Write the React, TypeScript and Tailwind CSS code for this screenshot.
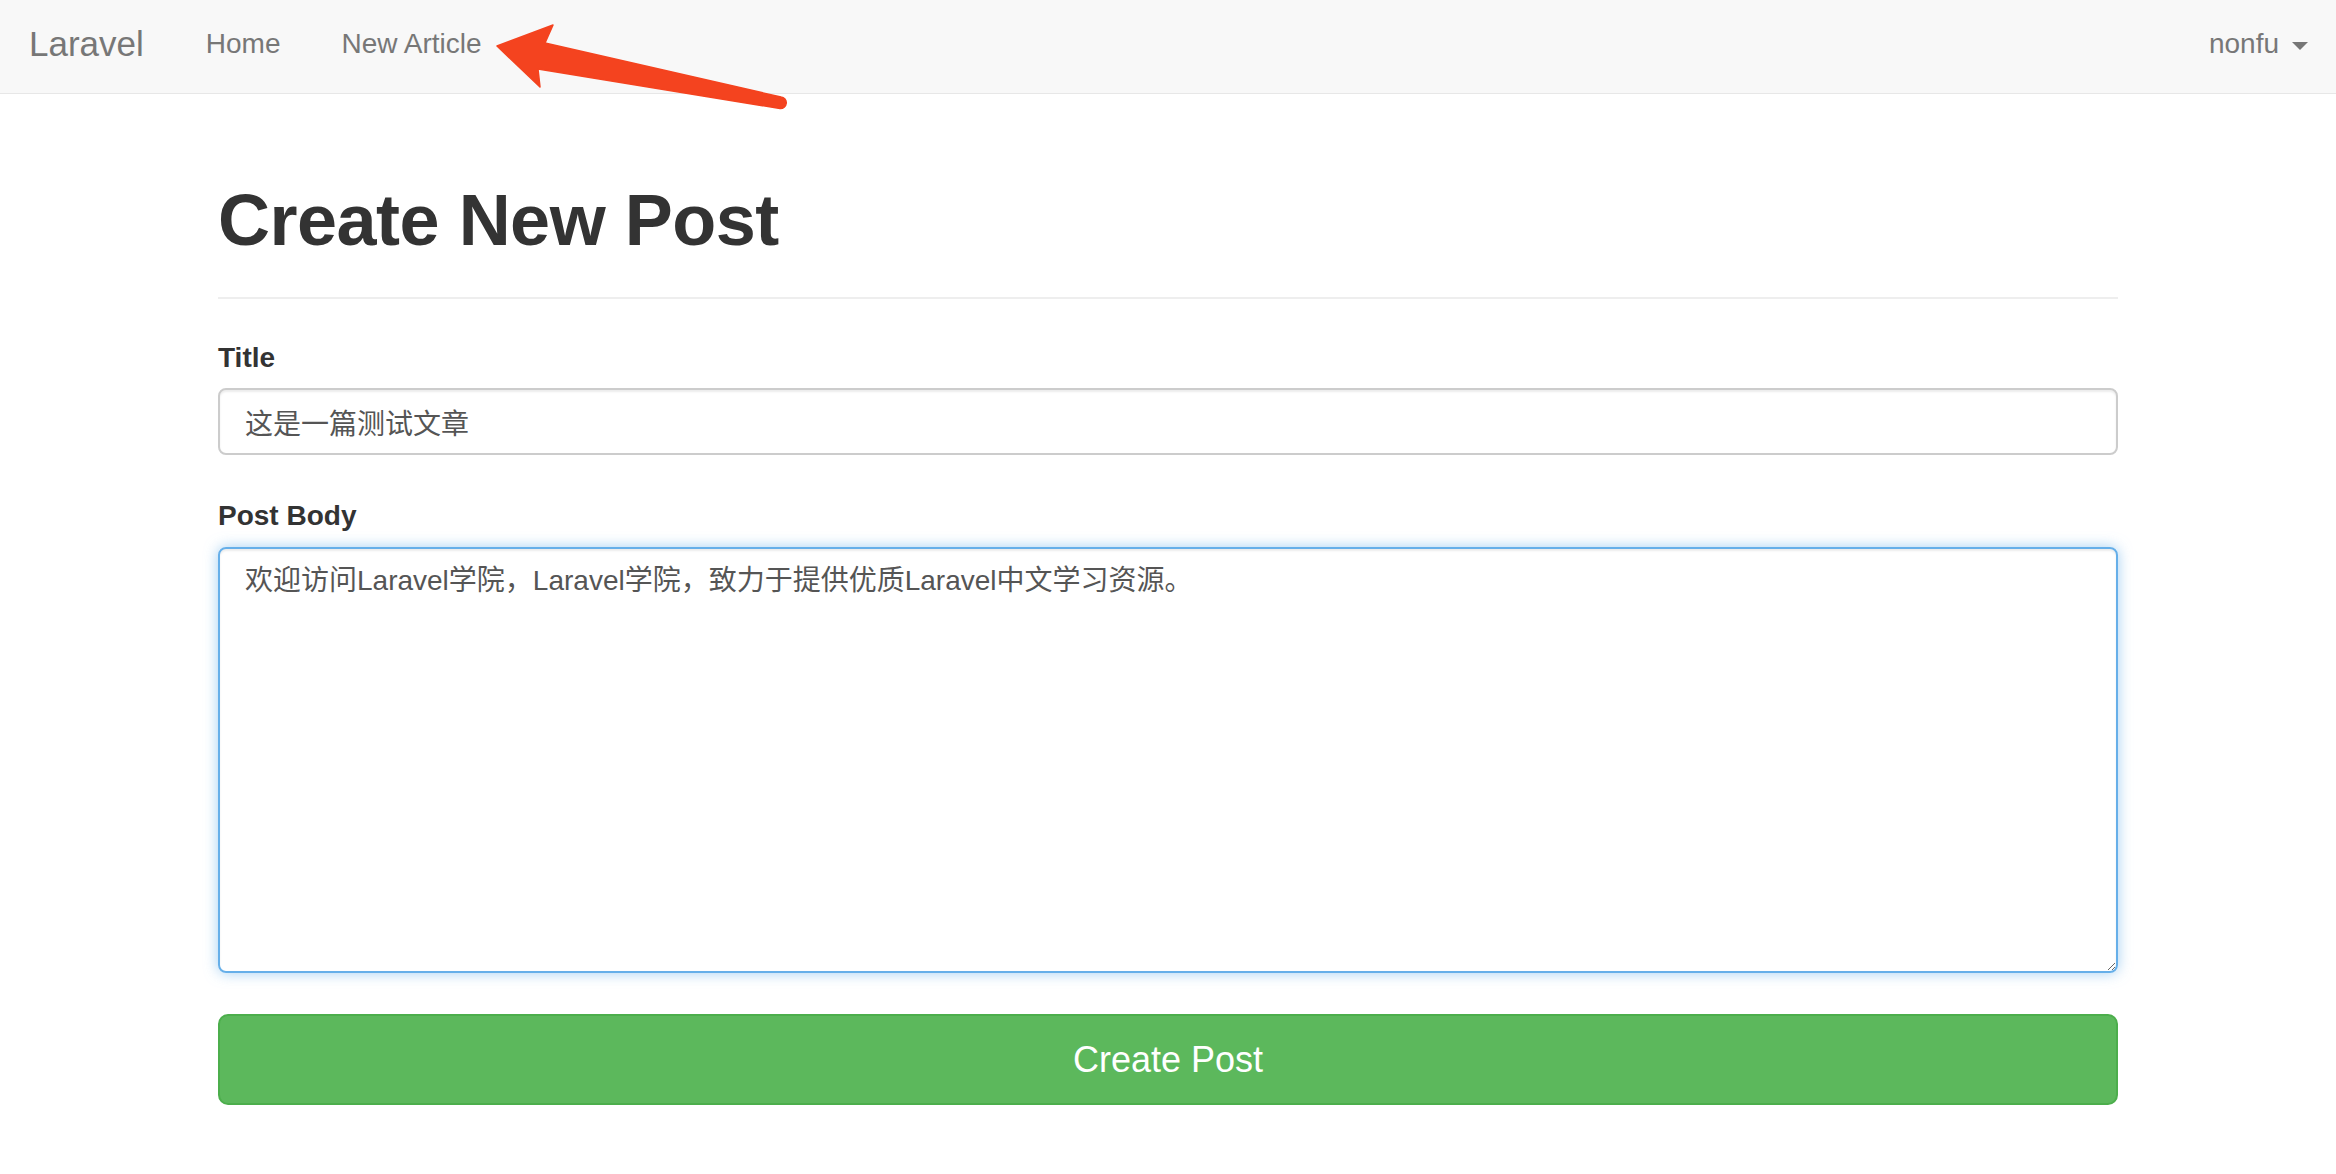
import React from "react";

const sans = '"Liberation Sans", "Noto Sans CJK SC", Arial, sans-serif';

function Caret() {
  return (
    <span className="inline-block w-0 h-0 border-t-[8px] border-t-[#777] border-x-[8px] border-x-transparent mt-[3px]" />
  );
}

function Navbar() {
  return (
    <nav className="h-[94px] bg-[#f8f8f8] border-b border-[#e7e7e7] flex items-start pt-[24px] justify-between">
      <div className="flex items-start">
        <a className="pl-[29px] text-[35px] leading-[40px] text-[#777]">Laravel</a>
        <ul className="flex ml-[62px] gap-[61px] text-[28px] leading-[40px] text-[#777]">
          <li>Home</li>
          <li>New Article</li>
        </ul>
      </div>
      <div className="flex items-center gap-[13px] pr-[28px] text-[28px] leading-[40px] text-[#777]">
        <span>nonfu</span>
        <Caret />
      </div>
    </nav>
  );
}

// Hand-drawn annotation arrow pointing at the "New Article" link
function Arrow() {
  return (
    <svg
      className="absolute left-0 top-0 pointer-events-none"
      width="2336"
      height="130"
      viewBox="0 0 2336 130"
    >
      <path
        d="M497 46 L553 25 L545 43 L781 97 A5.6 5.6 0 0 1 780 108.5 L538 69 L540 87 Z"
        fill="#f4431f"
        stroke="#f4431f"
        strokeWidth="1.5"
        strokeLinejoin="round"
      />
    </svg>
  );
}

export default function App() {
  return (
    <div className="relative min-h-[1174px] bg-white" style={{ fontFamily: sans }}>
      <Navbar />
      <Arrow />
      <main className="w-[1900px] mx-auto">
        <h1 className="mt-[90px] text-[72px] leading-[72px] font-bold tracking-[-0.5px] text-[#333]">
          Create New Post
        </h1>
        <div className="mt-[41px] h-[2px] bg-[#eeeeee]" />
        <form className="flex flex-col" onSubmit={(e) => e.preventDefault()}>
          <label className="mt-[39px] text-[28px] leading-[40px] font-bold text-[#333]">Title</label>
          <input
            className="mt-[10px] h-[67px] w-full rounded-[8px] border-2 border-[#cccccc] px-[25px] text-[28px] text-[#555] outline-none shadow-[inset_0_2px_2px_rgba(0,0,0,0.075)]"
            style={{ fontFamily: sans }}
            defaultValue="这是一篇测试文章"
          />
          <label className="mt-[41px] text-[28px] leading-[40px] font-bold text-[#333]">Post Body</label>
          <textarea
            className="mt-[11px] h-[426px] w-full resize-y rounded-[8px] border-2 border-[#66afe9] px-[25px] pt-[12px] text-[28px] leading-[40px] text-[#555] outline-none shadow-[inset_0_2px_2px_rgba(0,0,0,0.075),0_0_14px_rgba(102,175,233,0.6)]"
            style={{ fontFamily: sans }}
            defaultValue="欢迎访问Laravel学院，Laravel学院，致力于提供优质Laravel中文学习资源。"
          />
          <button
            type="submit"
            className="mt-[41px] h-[91px] w-full rounded-[10px] border-2 border-[#4cae4c] bg-[#5cb85c] text-[36px] text-white"
            style={{ fontFamily: sans }}
          >
            Create Post
          </button>
        </form>
      </main>
    </div>
  );
}
